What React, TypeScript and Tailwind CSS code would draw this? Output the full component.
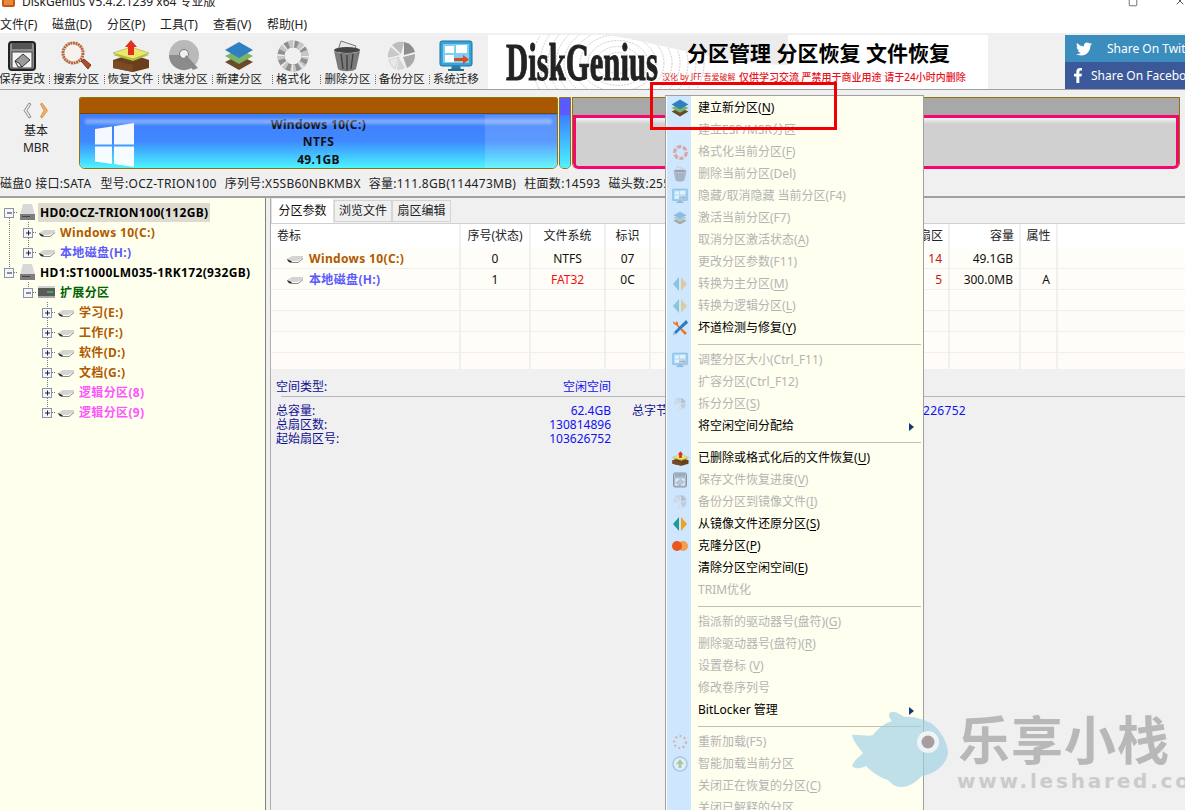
import { X, Square } from 'lucide-react'
import { FaTwitter, FaFacebookF } from 'react-icons/fa'
import clsx from 'clsx'

type IconProps = { size?: number; className?: string }

function SaveIcon({ size = 32 }: IconProps) {
  return (
    <svg width={size} height={size} viewBox="0 0 32 32">
      <rect x="3" y="2" width="26" height="28" rx="3" fill="#8c8c8c" stroke="#222" strokeWidth="2" />
      <rect x="6" y="3" width="20" height="6" fill="#555" />
      <rect x="6" y="12" width="20" height="16" fill="#f4f4f4" stroke="#444" />
      <path d="M9 21l8-7 7 6-8 7z" fill="#9a9a9a" stroke="#333" />
      <path d="M9 21l3 6h4l-3-4z" fill="#e8e8e8" stroke="#333" />
    </svg>
  )
}

function SearchIcon({ size = 32 }: IconProps) {
  return (
    <svg width={size} height={size} viewBox="0 0 32 32">
      <circle cx="13" cy="13" r="10" fill="#f7f2ee" stroke="#b5653f" strokeWidth="3" strokeDasharray="2 .6" />
      <path d="M21 21l3-2 7 6-3 4z" fill="#b14a28" stroke="#5a2a18" strokeWidth=".8" />
    </svg>
  )
}

function RecoverIcon({ size = 38 }: IconProps) {
  return (
    <svg width={size} height={size} viewBox="0 0 38 32">
      <path d="M1 20l18-6 18 6v8l-16 4-20-4z" fill="#6b3f1e" />
      <path d="M1 20l20 5v7l-20-4z" fill="#7a4a24" />
      <path d="M1 15l18-6 18 6-16 6z" fill="#a3c94b" />
      <path d="M1 13l18-6 18 6-16 6z" fill="#f0e66a" stroke="#9a9a30" strokeWidth=".5" />
      <path d="M16 15V7h-3l6-7 6 7h-3v8z" fill="#e0301e" />
    </svg>
  )
}

function DiscIcon({ size = 32 }: IconProps) {
  return (
    <svg width={size} height={size} viewBox="0 0 32 32">
      <circle cx="15" cy="15" r="15" fill="#b9b9b9" />
      <path d="M0 15a15 15 0 0 0 24 12l-9-12z" fill="#8c8c8c" />
      <circle cx="15" cy="14" r="4.500" fill="#f0f0f0" stroke="#777" />
      <path d="M17 15l12 13-5 2-9-11z" fill="#8a8a8a" />
    </svg>
  )
}

function LayersIcon({ size = 30 }: IconProps) {
  return (
    <svg width={size} height={size} viewBox="0 0 30 30">
      <path d="M1 21l14-7 14 7-14 8z" fill="#6b4a26" />
      <path d="M1 15l14-7 14 7-14 8z" fill="#7ab567" />
      <path d="M1 9l14-8 14 8-14 8z" fill="#2f7fc1" />
    </svg>
  )
}

function FormatIcon({ size = 32 }: IconProps) {
  return (
    <svg width={size} height={size} viewBox="0 0 32 32">
      <circle cx="16" cy="16" r="12" fill="none" stroke="#8f8f8f" strokeWidth="7" />
      <circle cx="16" cy="16" r="12" fill="none" stroke="#d8d8d8" strokeWidth="7" strokeDasharray="5 4 0 0" strokeDashoffset="2" opacity=".75" />
      <circle cx="16" cy="16" r="12" fill="none" stroke="#f0f0f0" strokeWidth="7.500" strokeDasharray="1.200 8.200" />
    </svg>
  )
}

function TrashIcon({ size = 32 }: IconProps) {
  return (
    <svg width={size} height={size} viewBox="0 0 32 32">
      <path d="M7 10l3-9 15 5-2 6z" fill="#e8e8e8" stroke="#777" />
      <ellipse cx="16" cy="10" rx="13" ry="3" fill="#444" />
      <path d="M3 11l4 18c3 3 15 3 18 0l4-18c-6 3-20 3-26 0z" fill="#7a7a7a" />
      <path d="M10 14l2 15M16 15v15M22 14l-2 15" stroke="#3d3d3d" strokeWidth="1.300" />
    </svg>
  )
}

function BackupIcon({ size = 32 }: IconProps) {
  return (
    <svg width={size} height={size} viewBox="0 0 32 32">
      <path d="M6 5a14 14 0 0 1 12-3l-3 12z" fill="#bdbdbd" />
      <path d="M18 2a14 14 0 0 1 11 10l-11 3z" fill="#8d8d8d" />
      <path d="M29 14a14 14 0 0 1-8 14l-4-11z" fill="#a9a9a9" />
      <path d="M19 28a14 14 0 0 1-8 2l2-12z" fill="#d4d4d4" />
      <path d="M9 29a14 14 0 0 1-6-9l10-3z" fill="#e8e8e8" stroke="#bbb" strokeWidth=".5" />
      <path d="M2 18a14 14 0 0 1 3-11l9 8z" fill="#c8c8c8" />
    </svg>
  )
}

function MigrateIcon({ size = 34 }: IconProps) {
  return (
    <svg width={size} height={size} viewBox="0 0 34 32">
      <rect x="1" y="1" width="32" height="25" rx="2" fill="#36a3d9" stroke="#1f6f9c" />
      <rect x="4" y="4" width="26" height="19" fill="#7fd0ee" />
      <path d="M6 6h9v7H6zM17 5h11v8H17zM6 15h9v7H6z" fill="#fff" />
      <path d="M15 18h9v-3l6 4.500-6 4.500v-3h-9z" fill="#e0491f" />
      <path d="M13 26h8l1 3h-10z" fill="#2a7aa8" />
      <rect x="9" y="29" width="16" height="2" fill="#1f6f9c" />
    </svg>
  )
}

function WrenchIcon({ size = 16 }: IconProps) {
  return (
    <svg width={size} height={size} viewBox="0 0 16 16">
      <path d="M4 5l1-1 10 9-2 2-9-10z" fill="#e8791f" />
      <path d="M5 5A3.500 3.500 0 0 1 1 1l2 2 1-.5L4 1a3.500 3.500 0 0 1 2 4z" fill="#e8791f" />
      <path d="M15 1l-1-1-7 7-5 5-1 3 3-1 5-5 7-6z" fill="#2a7fc4" />
      <path d="M2 12l2 2-3 1z" fill="#bcd" />
    </svg>
  )
}

function RestoreIcon({ size = 16 }: IconProps) {
  return (
    <svg width={size} height={size} viewBox="0 0 16 16">
      <path d="M7 1v14L1 8z" fill="#1d9a9a" />
      <path d="M9 1v14l6-7z" fill="#f0a21e" />
    </svg>
  )
}

function CloneIcon({ size = 16 }: IconProps) {
  return (
    <svg width={size} height={size} viewBox="0 0 16 16">
      <circle cx="11" cy="8" r="5" fill="#f0a04a" />
      <circle cx="5" cy="8" r="5" fill="#e8581e" />
    </svg>
  )
}

function RingIcon({ size = 16, color = '#d8a8a8' }: IconProps & { color?: string }) {
  return (
    <svg width={size} height={size} viewBox="0 0 16 16">
      <circle cx="8" cy="8" r="5.500" fill="none" stroke={color} strokeWidth="3" strokeDasharray="4 1.500" />
    </svg>
  )
}

function ReloadIcon({ size = 16 }: IconProps) {
  return (
    <svg width={size} height={size} viewBox="0 0 16 16">
      <circle cx="8" cy="8" r="6" fill="none" stroke="#d8b0b0" strokeWidth="2.200" strokeDasharray="2 2.500" />
    </svg>
  )
}

function SmartIcon({ size = 16 }: IconProps) {
  return (
    <svg width={size} height={size} viewBox="0 0 16 16">
      <circle cx="8" cy="8" r="7" fill="#e4eef2" stroke="#a8c8e8" strokeWidth="1.500" />
      <path d="M8 3l4 5H9.500v4h-3V8H4z" fill="#a8cca8" />
    </svg>
  )
}

function FlatDisk({ size = 18 }: IconProps) {
  return (
    <svg width={size} height={Math.round(size / 2)} viewBox="0 0 18 9" className="shrink-0">
      <path d="M1 5l5-3h11v2l-6 3H4z" fill="#d4d4d4" />
      <path d="M1 5l3 3h8l5-4v1l-5 4H4L1 6z" fill="#8a8a8a" />
      <path d="M1 5l4 2 1 1H3z" fill="#222" />
    </svg>
  )
}

function BigDisk() {
  return (
    <svg width="15" height="16" viewBox="0 0 15 16" className="shrink-0">
      <path d="M3 0h9l3 11H0z" fill="#d8d8d8" />
      <rect y="10" width="15" height="6" fill="#7e7e7e" />
      <rect x="2" y="12" width="8" height="1" fill="#444" />
    </svg>
  )
}

function ExtDisk() {
  return (
    <svg width="17" height="12" viewBox="0 0 17 12" className="shrink-0">
      <rect width="17" height="3" fill="#d0d0d0" />
      <rect y="2" width="17" height="8" fill="#5a5a5a" />
      <rect x="9" y="5" width="6" height="2" fill="#3fae4a" />
      <rect y="10" width="17" height="2" fill="#a8a8a8" />
    </svg>
  )
}

const toolbar = [
  { label: '保存更改', icon: <SaveIcon /> },
  { label: '搜索分区', icon: <SearchIcon /> },
  { label: '恢复文件', icon: <RecoverIcon /> },
  { label: '快速分区', icon: <DiscIcon /> },
  { label: '新建分区', icon: <LayersIcon /> },
  { label: '格式化', icon: <FormatIcon /> },
  { label: '删除分区', icon: <TrashIcon /> },
  { label: '备份分区', icon: <BackupIcon /> },
  { label: '系统迁移', icon: <MigrateIcon /> },
]

type TreeRow = {
  box: '+' | '-'
  cx: number
  lines: [number, number, number][]
  disk: 'big' | 'flat' | 'ext'
  text: string
  color: string
  selected?: boolean
}

const tree: TreeRow[] = [
  { box: '-', cx: 9, lines: [[9, 14, 20]], disk: 'big', text: 'HD0:OCZ-TRION100(112GB)', color: 'text-black', selected: true },
  { box: '+', cx: 28, lines: [[9, 0, 20], [28, 0, 20]], disk: 'flat', text: 'Windows 10(C:)', color: 'text-[#b05a00]' },
  { box: '+', cx: 28, lines: [[9, 0, 20], [28, 0, 10]], disk: 'flat', text: '本地磁盘(H:)', color: 'text-[#5a5aff]' },
  { box: '-', cx: 9, lines: [[9, 0, 6]], disk: 'big', text: 'HD1:ST1000LM035-1RK172(932GB)', color: 'text-black' },
  { box: '-', cx: 28, lines: [[28, 0, 6]], disk: 'ext', text: '扩展分区', color: 'text-[#006400]' },
  { box: '+', cx: 47, lines: [[47, 0, 20]], disk: 'flat', text: '学习(E:)', color: 'text-[#b05a00]' },
  { box: '+', cx: 47, lines: [[47, 0, 20]], disk: 'flat', text: '工作(F:)', color: 'text-[#b05a00]' },
  { box: '+', cx: 47, lines: [[47, 0, 20]], disk: 'flat', text: '软件(D:)', color: 'text-[#b05a00]' },
  { box: '+', cx: 47, lines: [[47, 0, 20]], disk: 'flat', text: '文档(G:)', color: 'text-[#b05a00]' },
  { box: '+', cx: 47, lines: [[47, 0, 20]], disk: 'flat', text: '逻辑分区(8)', color: 'text-[#ff55ff]' },
  { box: '+', cx: 47, lines: [[47, 0, 10]], disk: 'flat', text: '逻辑分区(9)', color: 'text-[#ff55ff]' },
]

function TreeItem({ row }: { row: TreeRow }) {
  const { cx } = row
  return (
    <div className="flex items-center h-[20px]">
      <svg width={cx + 9} height="20" viewBox={`0 0 ${cx + 9} 20`} className="shrink-0">
        {row.lines.map(([x, a, b], i) => (
          <line key={i} x1={x + 0.5} x2={x + 0.5} y1={a} y2={b} stroke="#777" strokeDasharray="1 1" />
        ))}
        <line x1={cx + 5} x2={cx + 9} y1="10.500" y2="10.500" stroke="#777" strokeDasharray="1 1" />
        <rect x={cx - 4.5} y="6.500" width="9" height="9" fill="#f4f4fa" stroke="#8a94a8" />
        <line x1={cx - 2} x2={cx + 3} y1="11" y2="11" stroke="#223" />
        {row.box === '+' && <line x1={cx + 0.5} x2={cx + 0.5} y1="8.500" y2="13.500" stroke="#223" />}
      </svg>
      <span className={clsx('flex justify-center', row.disk === 'big' ? 'w-[17px] ml-[1px]' : 'w-[19px]')}>
        {row.disk === 'big' && <BigDisk />}
        {row.disk === 'flat' && <FlatDisk />}
        {row.disk === 'ext' && <ExtDisk />}
      </span>
      <span className={clsx('px-[2px] ml-[2px] h-[19px] leading-[19px] font-bold text-[12px] tracking-[0.35px] whitespace-nowrap', row.color, row.selected && 'bg-[#dedcd0]')}>
        {row.text}
      </span>
    </div>
  )
}

type MenuEntry = { t: string; on?: boolean; icon?: React.ReactNode; sub?: boolean } | 'sep' | 'sep11'

const faded = 'opacity-40'

const menu: MenuEntry[] = [
  { t: '建立新分区(N)', on: true, icon: <LayersIcon size={18} /> },
  { t: '建立ESP/MSR分区' },
  { t: '格式化当前分区(F)', icon: <RingIcon size={17} /> },
  { t: '删除当前分区(Del)', icon: <span className={faded}><TrashIcon size={16} /></span> },
  { t: '隐藏/取消隐藏 当前分区(F4)', icon: <span className={faded}><MigrateIcon size={16} /></span> },
  { t: '激活当前分区(F7)', icon: <span className={faded}><LayersIcon size={14} /></span> },
  { t: '取消分区激活状态(A)' },
  { t: '更改分区参数(F11)' },
  { t: '转换为主分区(M)', icon: <span className={faded}><RestoreIcon size={16} /></span> },
  { t: '转换为逻辑分区(L)', icon: <span className={faded}><RestoreIcon size={16} /></span> },
  { t: '坏道检测与修复(Y)', on: true, icon: <WrenchIcon /> },
  'sep11',
  { t: '调整分区大小(Ctrl_F11)', icon: <span className={faded}><MigrateIcon size={16} /></span> },
  { t: '扩容分区(Ctrl_F12)' },
  { t: '拆分分区(S)', icon: <span className={faded}><BackupIcon size={14} /></span> },
  { t: '将空闲空间分配给', on: true, sub: true },
  'sep',
  { t: '已删除或格式化后的文件恢复(U)', on: true, icon: <RecoverIcon size={17} /> },
  { t: '保存文件恢复进度(V)', icon: <span className={faded}><SaveIcon size={16} /></span> },
  { t: '备份分区到镜像文件(I)', icon: <span className={faded}><BackupIcon size={16} /></span> },
  { t: '从镜像文件还原分区(S)', on: true, icon: <RestoreIcon /> },
  { t: '克隆分区(P)', on: true, icon: <CloneIcon /> },
  { t: '清除分区空闲空间(E)', on: true },
  { t: 'TRIM优化' },
  'sep',
  { t: '指派新的驱动器号(盘符)(G)' },
  { t: '删除驱动器号(盘符)(R)' },
  { t: '设置卷标 (V)' },
  { t: '修改卷序列号' },
  { t: 'BitLocker 管理', on: true, sub: true },
  'sep',
  { t: '重新加载(F5)', icon: <ReloadIcon /> },
  { t: '智能加载当前分区', icon: <SmartIcon /> },
  { t: '关闭正在恢复的分区(C)' },
  { t: '关闭已解释的分区' },
]

// (N) style mnemonics get an underlined letter, (F4) and (Del) do not
function MenuLabel({ t }: { t: string }) {
  const m = t.match(/^(.*)\(([A-Z])\)$/)
  if (!m) return <>{t}</>
  return (
    <>
      {m[1]}(<span className="underline underline-offset-2">{m[2]}</span>)
    </>
  )
}

const columns = ['卷标', '序号(状态)', '文件系统', '标识', '扇区', '容量', '属性', '']
const cols = 'grid grid-cols-[190px_70px_75px_45px_299px_71px_37px_1fr]'

const dataRows = [
  { name: 'Windows 10(C:)', color: 'text-[#b05a00]', no: '0', fs: 'NTFS', fsRed: false, id: '07', sec: '14', size: '49.1GB', attr: '' },
  { name: '本地磁盘(H:)', color: 'text-[#5a5aff]', no: '1', fs: 'FAT32', fsRed: true, id: '0C', sec: '5', size: '300.0MB', attr: 'A' },
]

export default function App() {
  return (
    <div className="relative w-[1185px] h-[810px] overflow-hidden flex flex-col bg-[#f0f0f0] text-[12px] text-[#111] [font-family:'Noto_Sans','Noto_Sans_CJK_SC',sans-serif]">
      {/* Title bar, cut off by the screenshot */}
      <div className="h-[16px] bg-white flex items-start shrink-0 overflow-hidden">
        <div className="w-[13px] h-[13px] ml-[2px] -mt-[6px] bg-[#e88a3a] rounded-[2px] border-2 border-[#c8561a]" />
        <div className="ml-[7px] -mt-[6px] text-[12px] leading-[16px] text-[#222]">DiskGenius V5.4.2.1239 x64 专业版</div>
        <Square className="w-[10px] h-[10px] ml-auto -mt-[3px] text-[#222]" strokeWidth={1.5} />
        <X className="w-[12px] h-[12px] ml-[36px] mr-[-1px] -mt-[5px] text-[#222]" strokeWidth={1.5} />
      </div>

      {/* Menu bar */}
      <div className="h-[17px] bg-white flex items-center shrink-0 leading-[17px]">
        {[['文件(F)', 52], ['磁盘(D)', 55], ['分区(P)', 53], ['工具(T)', 53], ['查看(V)', 54], ['帮助(H)', 50]].map(([m, w]) => (
          <span key={m} className="whitespace-nowrap text-[#222]" style={{ width: w as number }}>{m}</span>
        ))}
      </div>

      {/* Toolbar */}
      <div className="h-[57px] shrink-0 flex border-b border-[#a0a0a0] bg-[#f0f0f0]">
        <div className="flex w-[488px] shrink-0 -ml-[5px] mr-[5px]">
          {toolbar.map((t, i) => (
            <div key={t.label} className="w-[54.750px] overflow-hidden flex flex-col items-center pt-[7px]">
              <div className="h-[32px] flex items-center justify-center">{t.icon}</div>
              <div className="flex items-center -mt-[1px] leading-[16px] whitespace-nowrap text-[#222] text-[11.500px]">
                {i > 0 && <span className="w-[2px] h-[9px] -ml-[4px] mr-[2px] border-l border-dotted border-[#666]" />}
                <span>{t.label}</span>
              </div>
            </div>
          ))}
        </div>
        <div className="relative w-[500px] h-[54px] mt-[2px] bg-white overflow-hidden shrink-0">
          <svg width="300" height="54" viewBox="0 0 300 54" className="absolute left-0 top-0" fill="none">
            {[14, 22, 30, 38, 46, 54, 62, 70, 78, 86].map(r => (
              <ellipse key={r} cx="130" cy="28" rx={r} ry={r * 0.75} stroke="#d0d0d0" strokeWidth="1" strokeDasharray="2 1" />
            ))}
            <path d="M120 0c60 10 120 30 180 30v-30z" fill="#ececec" />
          </svg>
          <span className="absolute left-[18px] top-[-2px] origin-left scale-x-[.58] text-[53px] leading-[58px] font-bold text-[#222] [-webkit-text-stroke:1px_#222] [font-family:'Liberation_Serif',serif] whitespace-nowrap">DiskGenius</span>
          <span className="absolute left-[199px] top-[4px] text-[21px] leading-[28px] font-bold text-black whitespace-nowrap">分区管理 分区恢复 文件恢复</span>
          <span className="absolute left-[174px] top-[36px] text-[8px] leading-[12px] text-[#e02020] whitespace-nowrap">汉化 by JFF 吾爱破解</span>
          <span className="absolute left-[251px] top-[35px] text-[10px] leading-[14px] font-medium text-[#e8101c] whitespace-nowrap">仅供学习交流 严禁用于商业用途 请于24小时内删除</span>
        </div>
        <div className="ml-[77px] w-[120px] shrink-0 mt-[2px] flex flex-col overflow-hidden text-white">
          <div className="h-[27px] bg-[#3a8dbd] flex items-center pl-[11px] gap-[15px] whitespace-nowrap">
            <FaTwitter className="w-[16px] h-[16px] shrink-0" />
            <span>Share On Twitter</span>
          </div>
          <div className="h-[27px] bg-[#3b5998] flex items-center pl-[7px] gap-[7px] whitespace-nowrap">
            <FaFacebookF className="w-[12px] h-[15px] shrink-0" />
            <span>Share On Facebook</span>
          </div>
        </div>
      </div>

      {/* Disk map */}
      <div className="h-[108px] shrink-0 border-b-2 border-[#a0a0a0] pt-[7px]">
        <div className="flex h-[72px]">
          <div className="w-[79px] shrink-0 flex flex-col items-center pt-[5px] text-[#222]">
            <svg width="26" height="17" viewBox="0 0 26 17" className="-ml-[8px]">
              <path d="M6 1L1 8.500 6 16l2-1-4-6.500L8 2z" fill="#e8e8e8" stroke="#777" strokeWidth=".8" />
              <path d="M19 1l5.500 7.500L19 16l-1.500-1 3.500-6.500L17.500 2z" fill="#f0b060" stroke="#d08838" strokeWidth=".8" />
            </svg>
            <span className="-ml-[7px] mt-[3px] leading-[17px]">基本</span>
            <span className="-ml-[7px] leading-[17px]">MBR</span>
          </div>
          <div className="relative w-[479px] shrink-0 rounded-b-[6px] rounded-t-[2px] border border-[#8f7410] overflow-hidden flex flex-col">
            <div className="h-[16px] bg-[#a85800] border-b border-[#7a4400]" />
            <div className="flex-1 bg-gradient-to-b from-[#3f7dfc] via-[#4088ff] to-[#4ff4ff] flex flex-col items-center font-bold tracking-[0.35px] text-[#111] leading-[17.500px] pt-[2px]">
              <span>Windows 10(C:)</span>
              <span>NTFS</span>
              <span>49.1GB</span>
            </div>
            <div className="absolute left-[405px] right-0 top-[17px] bottom-0 bg-white/15" />
            <div className="absolute left-[5px] right-[5px] top-[21px] h-[5px] bg-white/35 blur-[1.5px]" />
            <svg width="40" height="44" viewBox="0 0 40 44" className="absolute left-[15px] top-[25px]">
              <path d="M0 6l17-2.500v18H0zM19 3.200L39 0v21.500H19zM0 23.500h17V41L0 38.500zM19 23.500h20V44l-20-3z" fill="#fff" fillOpacity=".95" />
            </svg>
          </div>
          <div className="ml-[1px] w-[12px] shrink-0 rounded-b-[5px] border border-[#8f7410] overflow-hidden flex flex-col">
            <div className="h-[17px] bg-[#5a5aff]" />
            <div className="flex-1 bg-gradient-to-b from-[#3f7dfc] to-[#4ff4ff]" />
          </div>
          <div className="ml-[1px] w-[608px] shrink-0 rounded-b-[6px] overflow-hidden flex flex-col border-t border-x border-[#8f7410]">
            <div className="h-[17px] bg-[#a8a8a8] shrink-0" />
            <div className="flex-1 bg-[#d0d0d0] border-[3px] border-[#f5076e] rounded-b-[5px]">
              <div className="h-[6px] bg-gradient-to-b from-[#f4f4f4] to-[#d0d0d0]" />
            </div>
          </div>
        </div>
        <div className="flex h-[15px] mt-[7px] leading-[15px] tracking-[0.3px] whitespace-nowrap text-[#222] overflow-hidden">
          <span>磁盘0 接口:SATA</span>
          <span className="ml-[9px]">型号:OCZ-TRION100</span>
          <span className="ml-[8px]">序列号:X5SB60NBKMBX</span>
          <span className="ml-[8px]">容量:111.8GB(114473MB)</span>
          <span className="ml-[8px]">柱面数:14593</span>
          <span className="ml-[8px]">磁头数:255</span>
        </div>
      </div>

      {/* Main area */}
      <div className="flex-1 flex min-h-0">
        <div className="w-[266px] shrink-0 bg-[#ffffee] border-r border-[#808080] pt-[4px] overflow-hidden">
          {tree.map(r => <TreeItem key={r.text} row={r} />)}
        </div>
        <div className="flex-1 ml-[4px] border-l border-[#b0b0b0] flex flex-col min-w-0">
          <div className="h-[26px] shrink-0 flex pt-[1px] border-b border-[#d0d0d0]">
            <div className="w-[63px] h-[24px] bg-white flex items-center justify-center border-x border-[#e0e0e0]">分区参数</div>
            <div className="w-[58px] h-[22px] mt-[1px] flex items-center justify-center border border-[#d4d4d4] text-[#222]">浏览文件</div>
            <div className="w-[59px] h-[22px] mt-[1px] flex items-center justify-center border border-[#d4d4d4] text-[#222]">扇区编辑</div>
          </div>
          <div className="h-[145px] shrink-0 overflow-hidden bg-[#fffdf7]">
            <div className={clsx(cols, 'h-[24px] bg-white items-center text-[#222]')}>
              {columns.map((c, i) => (
                <div key={i} className={clsx('h-full flex items-center border-r-2 border-[#f0f0f0] last:border-r-0', i === 0 ? 'pl-[6px]' : i >= 4 && i < 6 ? 'justify-end pr-[5px]' : 'justify-center')}>{c}</div>
              ))}
            </div>
            {[0, 1, 2, 3, 4, 5].map(n => {
              const r = dataRows[n]
              const cell = 'h-full flex items-center pt-[1px] border-r-2 border-[#f0f0f0]'
              return (
                <div key={n} className={clsx(cols, 'h-[21px] border-b border-[#efefef]', n > 1 && n % 2 === 1 ? 'bg-[#fffbf6]' : '')}>
                  <div className={clsx(cell, 'pl-[15px] gap-[5px]')}>
                    {r && <FlatDisk />}
                    {r && <span className={clsx('font-bold tracking-[0.35px]', r.color)}>{r.name}</span>}
                  </div>
                  <div className={clsx(cell, 'justify-center')}>{r?.no}</div>
                  <div className={clsx(cell, 'justify-center', r?.fsRed && 'text-[#f01010]')}>{r?.fs}</div>
                  <div className={clsx(cell, 'justify-center')}>{r?.id}</div>
                  <div className={clsx(cell, 'justify-end pr-[6px] text-[#c01818]')}>{r?.sec}</div>
                  <div className={clsx(cell, 'justify-end pr-[6px]')}>{r?.size}</div>
                  <div className={clsx(cell, 'justify-end pr-[6px]')}>{r?.attr}</div>
                  <div />
                </div>
              )
            })}
          </div>
          <div className="flex-1 text-[#1010d0] leading-[14px]">
            <div className="h-[27px] ml-[5px] flex items-end pb-[2px] w-[335px] justify-between text-[#101090]">
              <span>空间类型:</span>
              <span className="text-[#1010f0]">空闲空间</span>
            </div>
            <div className="h-[1px] ml-[10px] bg-[#b8b8b8]" />
            <div className="ml-[5px] mt-[7px] grid grid-cols-[335px_355px] w-[690px]">
              <div className="flex justify-between text-[#101090]"><span>总容量:</span><span className="text-[#1010f0]">62.4GB</span></div>
              <div className="flex justify-between pl-[21px]"><span className="text-[#101090]">总字节数:</span><span className="text-[#1010f0] tracking-[0.3px]">66977226752</span></div>
              <div className="flex justify-between text-[#101090]"><span>总扇区数:</span><span className="text-[#1010f0]">130814896</span></div>
              <div />
              <div className="flex justify-between text-[#101090]"><span>起始扇区号:</span><span className="text-[#1010f0]">103626752</span></div>
            </div>
          </div>
        </div>
      </div>

      {/* Context menu */}
      <div className="absolute left-[665px] top-[95px] w-[259px] h-[715px] overflow-hidden bg-[#ffffef] border-x border-t border-[#a0a0a0] pt-[1px]">
        <div className="absolute left-[1px] top-0 bottom-0 w-[24px] bg-[#cfe6ff]" />
        <div className="relative">
          {menu.map((m, i) => {
            if (m === 'sep' || m === 'sep11') {
              return (
                <div key={i} className={clsx('flex items-center pl-[32px] pr-[2px]', m === 'sep' ? 'h-[10px]' : 'h-[10px]')}>
                  <div className="h-[1px] w-full bg-[#bfbfb4]" />
                </div>
              )
            }
            return (
              <div key={i} className={clsx('relative flex items-center h-[22px] whitespace-nowrap', m.on ? 'text-black' : 'text-[#b4b4b4]')}>
                <span className="w-[28px] flex justify-center shrink-0">{m.icon}</span>
                <span className="ml-[4px]"><MenuLabel t={m.t} /></span>
                {m.sub && <span className="absolute right-[9px] top-[8px] border-y-[4px] border-l-[5px] border-y-transparent border-l-[#123a70]" />}
              </div>
            )
          })}
        </div>
      </div>

      {/* Red annotation box */}
      <div className="absolute left-[650px] top-[82px] w-[187px] h-[48px] border-[3px] border-[#f00000]" />

      {/* Watermark */}
      <svg width="104" height="84" viewBox="0 0 104 84" className="absolute left-[850px] top-[708px]">
        <path d="M2 27C10 26 17 29 23 27C28 20 35 15 42 13C38 9 38 4 42 4C47 3 51 8 55 9C65 8 73 12 81 15C90 22 98 34 98 45C96 58 84 66 72 68C66 74 58 80 50 79C44 79 40 74 38 72C30 70 22 64 16 58C12 60 6 62 2 58C4 52 10 48 13 45C9 40 3 33 2 27Z" fill="#9dd0e4" fillOpacity=".65" />
        <circle cx="78" cy="34" r="11" fill="#eef4f6" />
        <circle cx="78" cy="34" r="6.500" fill="#a89ea2" />
      </svg>
      <div className="absolute left-[958px] top-[708px] text-[52px] leading-[64px] font-bold text-[#b8b8b8] tracking-[1px] whitespace-nowrap">乐享小栈</div>
      <div className="absolute left-[957px] top-[770px] text-[20px] leading-[22px] font-bold text-[#cbcbcb] tracking-[2.800px] whitespace-nowrap [font-family:'DejaVu_Sans',sans-serif]">www.leshared.com</div>
    </div>
  )
}
